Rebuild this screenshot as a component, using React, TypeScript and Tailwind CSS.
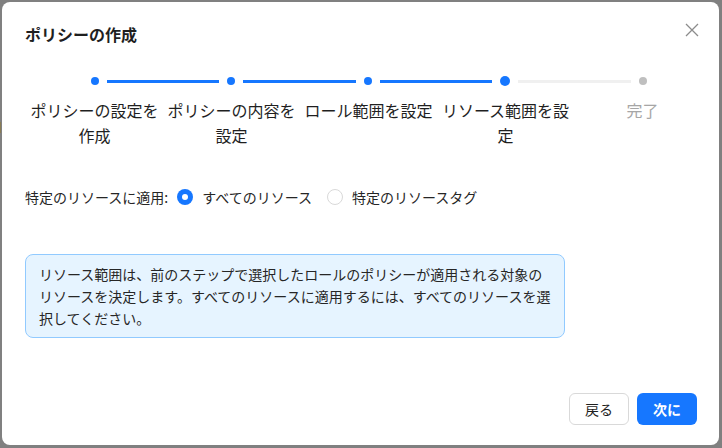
import React from 'react';

const steps = [
  { label: 'ポリシーの設定を作成', status: 'done' },
  { label: 'ポリシーの内容を設定', status: 'done' },
  { label: 'ロール範囲を設定', status: 'done' },
  { label: 'リソース範囲を設定', status: 'current' },
  { label: '完了', status: 'wait' },
];

function Dot({ status }: { status: string }) {
  if (status === 'current') return <div className="w-[10px] h-[10px] rounded-full bg-[#1677ff] shrink-0" />;
  if (status === 'wait') return <div className="w-[8px] h-[8px] rounded-full bg-[#bfbfbf] shrink-0" />;
  return <div className="w-[8px] h-[8px] rounded-full bg-[#1677ff] shrink-0" />;
}

function Radio({ checked }: { checked?: boolean }) {
  return checked ? (
    <span className="w-4 h-4 rounded-full bg-[#1677ff] flex items-center justify-center shrink-0">
      <span className="w-[6px] h-[6px] rounded-full bg-white" />
    </span>
  ) : (
    <span className="w-4 h-4 rounded-full border border-[#d9d9d9] bg-white shrink-0" />
  );
}

export default function App() {
  return (
    <div
      className="w-[722px] h-[448px] bg-[#808080] flex overflow-hidden"
      style={{ fontFamily: '"Noto Sans CJK JP", "Noto Sans", sans-serif' }}
    >
      {/* page behind the overlay */}
      <div className="w-[2px] shrink-0 pt-[122px]">
        <div className="w-[1px] h-[11px] bg-[#8a7d55]" />
      </div>

      <div className="mt-[2px] w-[717px] h-[443px] bg-white rounded-lg flex flex-col text-[#1f1f1f]">
        {/* Header */}
        <div className="flex items-center justify-between pt-5 pl-6 pr-5">
          <h1 className="text-[16px] leading-6 font-bold -ml-[1px]">ポリシーの作成</h1>
          <button className="text-[#8c8c8c] -mt-2">
            <svg width="14" height="14" viewBox="0 0 14 14" fill="none" stroke="currentColor" strokeWidth="1.3">
              <path d="M1 1l12 12M13 1L1 13" />
            </svg>
          </button>
        </div>

        {/* Steps */}
        <div className="pl-6 pr-2">
          <div className="mt-[30px] h-[10px] flex items-center px-[64.5px]">
            {steps.map((s, i) => (
              <React.Fragment key={s.label}>
                <Dot status={s.status} />
                {i < steps.length - 1 && (
                  <div
                    className={`flex-1 h-[3px] mx-[8px] ${
                      steps[i + 1].status === 'wait' ? 'bg-[#f0f0f0]' : 'bg-[#1677ff]'
                    }`}
                  />
                )}
              </React.Fragment>
            ))}
          </div>
          <div className="mt-[12px] flex">
            {steps.map((s) => (
              <div
                key={s.label}
                className={`w-[137px] text-center text-[16px] leading-[25px] ${
                  s.status === 'wait' ? 'text-[#a6a6a6]' : 'text-[#1f1f1f]'
                }`}
              >
                {s.label}
              </div>
            ))}
          </div>
        </div>

        {/* Radio row */}
        <div className="mt-[38px] pl-[23px] flex items-center text-[14px] leading-[22px] text-[#262626]">
          <span>特定のリソースに適用:</span>
          <label className="ml-[9px] flex items-center gap-[9px]">
            <Radio checked />
            <span>すべてのリソース</span>
          </label>
          <label className="ml-[15px] flex items-center gap-[9px]">
            <Radio />
            <span>特定のリソースタグ</span>
          </label>
        </div>

        {/* Info */}
        <div className="mt-[46px] ml-[23px] w-[540px] rounded-lg border border-[#91caff] bg-[#e6f4ff] px-[13px] py-2 text-[14px] leading-[22px] text-[#262626] whitespace-nowrap">
          リソース範囲は、前のステップで選択したロールのポリシーが適用される対象の
          <br />
          リソースを決定します。すべてのリソースに適用するには、すべてのリソースを選
          <br />
          択してください。
        </div>

        {/* Footer */}
        <div className="mt-auto flex justify-end gap-2 pr-[22px] pb-5">
          <button className="h-8 w-[60px] rounded-md border border-[#d9d9d9] bg-white text-[14px] text-[#1f1f1f]">
            戻る
          </button>
          <button className="h-8 w-[60px] rounded-md bg-[#1677ff] text-[14px] font-bold text-white">
            次に
          </button>
        </div>
      </div>
    </div>
  );
}
